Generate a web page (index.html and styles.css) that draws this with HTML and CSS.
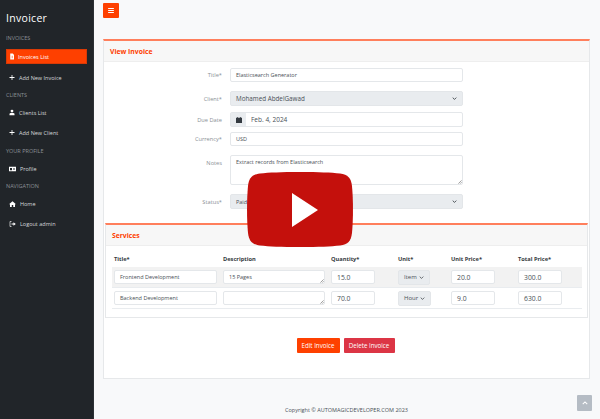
FILE: index.html
```html
<!DOCTYPE html>
<html lang="en">
<head>
<meta charset="UTF-8">
<meta name="viewport" content="width=device-width, initial-scale=1.0">
<title>View Invoice</title>
<link rel="stylesheet" href="styles.css">
</head>
<body>

<div class="layout">
  <aside class="sidebar">
    <div class="logo">Invoicer</div>

    <div class="nav-heading nav-heading-first">INVOICES</div>
    <a class="nav-item active">
      <svg class="nav-icon" viewBox="0 0 12 12"><path fill="#fff" d="M2.5 0H7.5L10 2.500V12H2.500Z"/><path fill="#fe4000" d="M5.600 4.500H6.900V9.500H5.600Z"/></svg>
      Invoices List
    </a>
    <a class="nav-item nav-item-add">
      <svg class="nav-icon" viewBox="0 0 12 12"><path fill="#fff" d="M5.200 1H6.800V5.200H11V6.800H6.800V11H5.200V6.800H1V5.200H5.200Z"/></svg>
      Add New Invoice
    </a>

    <div class="nav-heading">CLIENTS</div>
    <a class="nav-item nav-item-client">
      <svg class="nav-icon" viewBox="0 0 12 12"><circle fill="#fff" cx="6" cy="3.200" r="2.800"/><path fill="#fff" d="M1 11.500V9Q1 6.800 3.500 6.800H8.500Q11 6.800 11 9V11.500Z"/></svg>
      Clients List
    </a>
    <a class="nav-item nav-item-add">
      <svg class="nav-icon" viewBox="0 0 12 12"><path fill="#fff" d="M5.200 1H6.800V5.200H11V6.800H6.800V11H5.200V6.800H1V5.200H5.200Z"/></svg>
      Add New Client
    </a>

    <div class="nav-heading nav-heading-profile">YOUR PROFILE</div>
    <a class="nav-item nav-item-client">
      <svg class="nav-icon nav-icon-wide" viewBox="0 0 14 11"><path fill="#fff" fill-rule="evenodd" d="M0 1H14V10H0ZM2 3.500V8H6V3.500ZM8 3.500V4.700H12V3.500ZM8 6V7.200H12V6Z"/></svg>
      Profile
    </a>

    <div class="nav-heading nav-heading-nav">NAVIGATION</div>
    <a class="nav-item nav-item-client">
      <svg class="nav-icon nav-icon-wide" viewBox="0 0 14 12"><path fill="#fff" d="M7 0.500L14 6.500H12V12H8.500V8H5.500V12H2V6.500H0Z"/></svg>
      Home
    </a>
    <a class="nav-item nav-item-logout">
      <svg class="nav-icon nav-icon-wide" viewBox="0 0 14 12"><path fill="none" stroke="#fff" stroke-width="1.300" d="M5 1H2V11H5"/><path fill="#fff" d="M9 2.500L13.500 6L9 9.500V7.200H5V4.800H9Z"/></svg>
      Logout admin
    </a>
  </aside>

  <div class="main">
    <div class="topbar">
      <button class="menu-btn" aria-label="Menu">
        <svg viewBox="0 0 8 7" width="6" height="5"><path fill="#fff" d="M0 0H8V1.300H0ZM0 2.800H8V4.100H0ZM0 5.600H8V6.900H0Z"/></svg>
      </button>
    </div>

    <section class="card">
      <h2 class="card-header">View Invoice</h2>

      <div class="form">
        <div class="form-row row-title">
          <label>Title*</label>
          <div class="control">Elasticsearch Generator</div>
        </div>
        <div class="form-row row-client">
          <label>Client*</label>
          <div class="control control-select control-select-lg">Mohamed AbdelGawad
            <svg class="chevron" viewBox="0 0 8 5"><path fill="none" stroke="#343a40" stroke-width="1.400" d="M1 1L4 4L7 1"/></svg>
          </div>
        </div>
        <div class="form-row row-date">
          <label>Due Date</label>
          <div class="input-group">
            <span class="input-addon">
              <svg viewBox="0 0 7 7" width="6" height="6"><path fill="#343a40" d="M1.500 0H2.400V1H4.600V0H5.500V1H7V7H0V1H1.500Z"/></svg>
            </span>
            <span class="input-group-text">Feb. 4, 2024</span>
          </div>
        </div>
        <div class="form-row row-currency">
          <label>Currency*</label>
          <div class="control">USD</div>
        </div>
        <div class="form-row row-notes">
          <label class="label-top">Notes</label>
          <div class="control control-area">Extract records from Elasticsearch
            <svg class="grip" viewBox="0 0 5 5"><path stroke="#555" stroke-width="0.700" d="M0.500 4.500L4.500 0.500M2.800 4.500L4.500 2.800"/></svg>
          </div>
        </div>
        <div class="form-row row-status">
          <label>Status*</label>
          <div class="control control-select">Paid
            <svg class="chevron" viewBox="0 0 8 5"><path fill="none" stroke="#343a40" stroke-width="1.400" d="M1 1L4 4L7 1"/></svg>
          </div>
        </div>
      </div>

      <section class="card card-inner">
        <h2 class="card-header">Services</h2>
        <div class="services">
          <div class="service-row service-head">
            <span>Title*</span>
            <span>Description</span>
            <span>Quantity*</span>
            <span>Unit*</span>
            <span>Unit Price*</span>
            <span>Total Price*</span>
          </div>
          <div class="service-row service-line striped">
            <div class="control cell-title">Frontend Development</div>
            <div class="control cell-desc">15 Pages
              <svg class="grip" viewBox="0 0 5 5"><path stroke="#555" stroke-width="0.700" d="M0.500 4.500L4.500 0.500M2.800 4.500L4.500 2.800"/></svg>
            </div>
            <div class="control cell-qty">15.0</div>
            <div class="control control-select cell-unit">Item
              <svg class="chevron" viewBox="0 0 8 5"><path fill="none" stroke="#343a40" stroke-width="1.200" d="M1 1L4 4L7 1"/></svg>
            </div>
            <div class="control cell-qty">20.0</div>
            <div class="control cell-qty">300.0</div>
          </div>
          <div class="service-row service-line">
            <div class="control cell-title">Backend Development</div>
            <div class="control cell-desc">
              <svg class="grip" viewBox="0 0 5 5"><path stroke="#555" stroke-width="0.700" d="M0.500 4.500L4.500 0.500M2.800 4.500L4.500 2.800"/></svg>
            </div>
            <div class="control cell-qty">70.0</div>
            <div class="control control-select cell-unit cell-unit-wide">Hour
              <svg class="chevron" viewBox="0 0 8 5"><path fill="none" stroke="#343a40" stroke-width="1.200" d="M1 1L4 4L7 1"/></svg>
            </div>
            <div class="control cell-qty">9.0</div>
            <div class="control cell-qty">630.0</div>
          </div>
        </div>
      </section>

      <div class="actions">
        <button class="btn btn-edit">Edit Invoice</button>
        <button class="btn btn-delete">Delete Invoice</button>
      </div>
    </section>

    <footer class="footer">Copyright © AUTOMAGICDEVELOPER.COM 2023</footer>
  </div>
</div>

<!-- video play overlay -->
<svg class="play" viewBox="0 0 106 75">
  <path fill="#c4100c" d="M53 0C72 0 84 0.500 93 1.500C101 2.500 104 6 105 14C106.300 28 106.300 47 105 61C104 69 101 72.500 93 73.500C84 74.500 72 75 53 75C34 75 22 74.500 13 73.500C5 72.500 2 69 1 61C-0.300 47 -0.300 28 1 14C2 6 5 2.500 13 1.500C22 0.500 34 0 53 0Z"/>
  <path fill="#fff" d="M45 21L71 38L45 55Z"/>
</svg>

<button class="scroll-top" aria-label="Back to top">
  <svg viewBox="0 0 8 5" width="6" height="4"><path fill="none" stroke="#fff" stroke-width="1.400" d="M1 4L4 1L7 4"/></svg>
</button>

</body>
</html>
```

FILE: styles.css
```css
* {
    box-sizing: border-box;
}
html, body {
    margin: 0;
    height: 419px;
    overflow: hidden;
}
body {
    font-family: "Open Sans", "Liberation Sans", sans-serif;
    font-size: 5.500px;
    color: #495057;
    background-color: #f8f9fa;
    position: relative;
}
.layout {
    display: flex;
    height: 419px;
}

/* sidebar */
.sidebar {
    width: 94px;
    flex: none;
    background-color: #212529;
    color: #d5d7d9;
    padding: 0 6px;
    border-right: 1px solid #2c3034;
}
.logo {
    color: #fff;
    font-size: 10.500px;
    line-height: 16px;
    letter-spacing: 0.300px;
    padding-top: 10px;
    height: 26px;
}
.nav-heading {
    color: #8b9096;
    font-size: 5.500px;
    line-height: 8px;
    margin-top: 9px;
}
.nav-heading-first {
    margin-top: 8px;
}
.nav-heading-profile {
    margin-top: 12px;
}
.nav-heading-nav {
    margin-top: 6px;
}
.nav-item {
    display: flex;
    align-items: center;
    gap: 4px;
    height: 15px;
    padding-left: 3px;
    white-space: nowrap;
}
.nav-item.active {
    background-color: #fe4000;
    border: 1px solid #d93a06;
    margin-top: 7px;
    padding-left: 2px;
    gap: 3px;
    color: #fff;
}
.nav-item-add {
    margin-top: 6px;
    padding-left: 3px;
}
.nav-item-add + .nav-heading {
    margin-top: 6px;
}
.nav-item-add + .nav-heading-profile {
    margin-top: 7px;
}
.nav-item-client {
    margin-top: 6px;
    padding-left: 3px;
}
.nav-item-client + .nav-item-add {
    margin-top: 5px;
}
.nav-item-logout {
    margin-top: 5px;
    padding-left: 3px;
}
.nav-icon {
    width: 6px;
    height: 7px;
    flex: none;
}
.nav-icon-wide {
    width: 7px;
    height: 6px;
}

/* main column */
.main {
    flex: 1;
    padding: 0 10px 0 9px;
    min-width: 0;
}
.topbar {
    height: 39px;
    padding-top: 3px;
}
.menu-btn {
    display: flex;
    align-items: center;
    justify-content: center;
    width: 16px;
    height: 15px;
    padding: 0;
    border: 0;
    border-radius: 1px;
    background-color: #fe4000;
}

.card {
    background-color: #fff;
    border: 1px solid #e6e8ea;
    border-top: 2px solid #ff7f5c;
    height: 340px;
}
.card-header {
    margin: 0;
    height: 21px;
    line-height: 21px;
    padding-left: 6px;
    font-size: 6.800px;
    font-weight: 700;
    color: #fe4000;
    background-color: #f7f7f7;
    border-bottom: 1px solid #eeeeee;
}

/* invoice form */
.form {
    height: 155px;
}
.form-row {
    display: flex;
    align-items: center;
    gap: 8px;
    padding-left: 0;
}
.form-row label {
    width: 118px;
    flex: none;
    text-align: right;
    font-size: 5.700px;
    color: #8a9096;
}
.form-row .label-top {
    align-self: flex-start;
    padding-top: 4px;
}
.row-title {
    margin-top: 6px;
}
.row-client {
    margin-top: 9px;
}
.row-date {
    margin-top: 6px;
}
.row-currency {
    margin-top: 5px;
}
.row-notes {
    margin-top: 9px;
}
.row-status {
    margin-top: 9px;
}
.control {
    position: relative;
    display: flex;
    align-items: center;
    height: 14px;
    width: 233px;
    padding-left: 5px;
    background-color: #fff;
    border: 1px solid #e4e7ea;
    border-radius: 2px;
    white-space: nowrap;
}
.control-area {
    height: 30px;
    align-items: flex-start;
    padding-top: 2px;
}
.control-select {
    background-color: #e9ecef;
    border-color: #e3e6e9;
    height: 15px;
    justify-content: space-between;
    padding-right: 5px;
}
.control-select-lg {
    font-size: 6.300px;
}
.chevron {
    width: 5px;
    height: 3px;
    flex: none;
}
.grip {
    position: absolute;
    right: 0;
    bottom: 0;
    width: 4px;
    height: 4px;
}
.input-group {
    display: flex;
    width: 233px;
    height: 15px;
    border: 1px solid #e4e7ea;
    border-radius: 2px;
    background-color: #fff;
}
.input-addon {
    display: flex;
    align-items: center;
    justify-content: center;
    width: 15px;
    background-color: #e9ecef;
}
.input-group-text {
    display: flex;
    align-items: center;
    padding-left: 5px;
    font-size: 6.500px;
}

/* services table */
.card-inner {
    margin: 0 1px;
    height: 95px;
}
.services {
    padding: 0 5px 0 6px;
}
.service-row {
    display: grid;
    grid-template-columns: 109px 108px 67px 53px 67px 1fr;
    padding-left: 2px;
}
.service-head {
    height: 21px;
    align-items: flex-end;
    padding-bottom: 4px;
    font-size: 5.700px;
    font-weight: 700;
    color: #343a40;
}
.service-line {
    height: 21px;
    align-items: center;
    border-bottom: 1px solid #e9ecef;
}
.striped {
    background-color: #f2f2f2;
}
.cell-title {
    width: 103px;
}
.cell-desc {
    width: 102px;
}
.cell-qty {
    width: 44px;
    font-size: 6.800px;
}
.cell-unit {
    width: 32px;
    font-size: 6px;
}
.cell-unit-wide {
    width: 33px;
}

/* buttons */
.actions {
    display: flex;
    justify-content: center;
    gap: 4px;
    padding-top: 20px;
    padding-right: 2px;
}
.btn {
    height: 15px;
    padding: 0;
    border: 0;
    border-radius: 1px;
    font-family: inherit;
    font-size: 6.200px;
    white-space: nowrap;
    color: #fff;
}
.btn-edit {
    width: 43px;
    background-color: #fe4000;
}
.btn-delete {
    width: 51px;
    background-color: #dc3545;
}

.footer {
    margin-top: 27px;
    text-align: center;
    font-size: 5.500px;
    color: #495057;
}

/* things lying over the page */
.play {
    position: absolute;
    left: 247px;
    top: 172px;
    width: 106px;
    height: 75px;
}
.scroll-top {
    position: absolute;
    left: 577px;
    top: 395px;
    display: flex;
    align-items: center;
    justify-content: center;
    width: 15px;
    height: 16px;
    padding: 0;
    border: 0;
    border-radius: 1px;
    background-color: #b5bcc4;
}
```
